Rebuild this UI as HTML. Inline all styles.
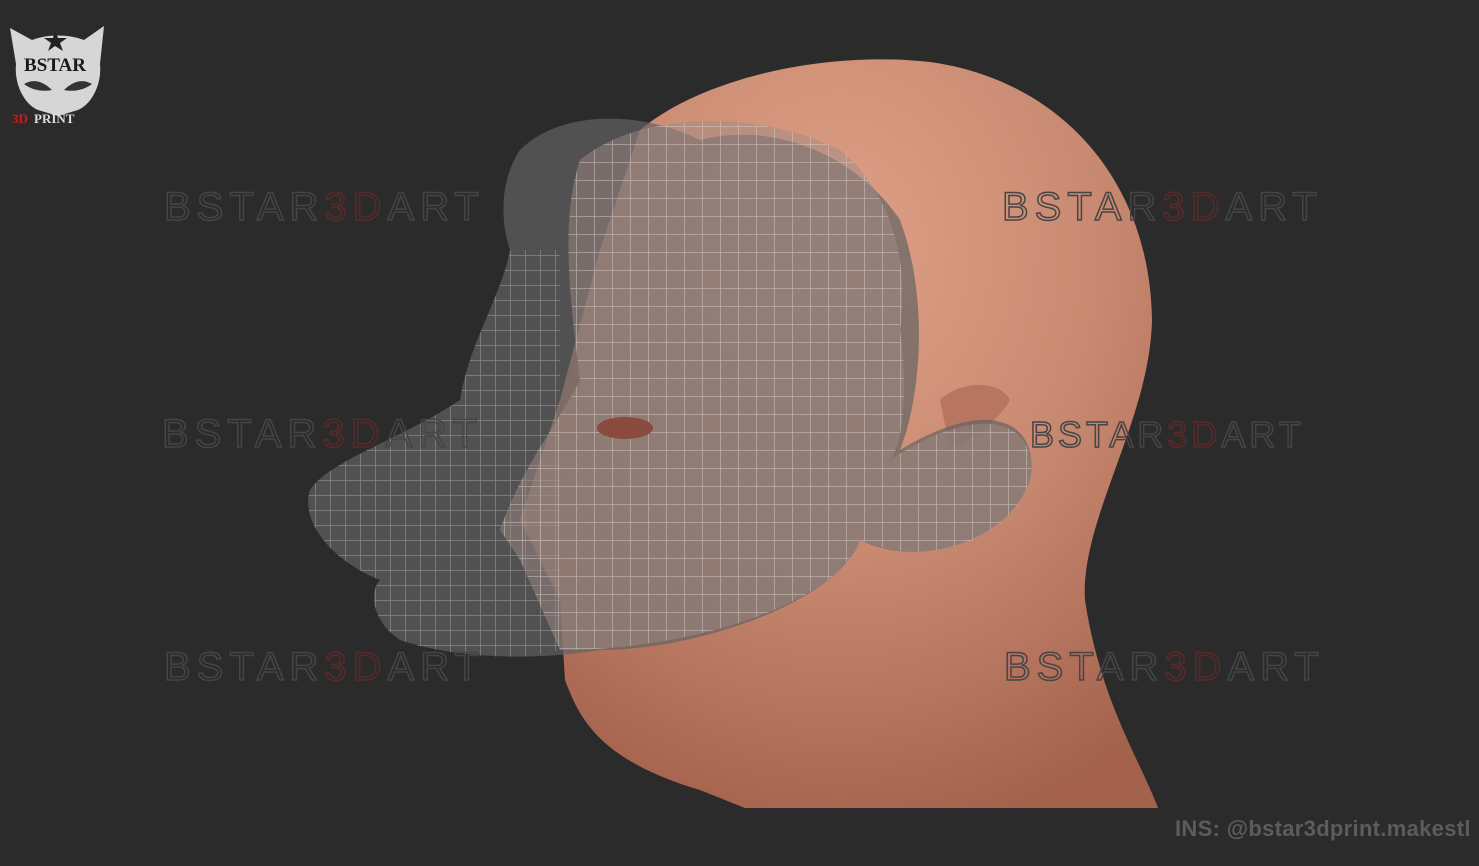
<!DOCTYPE html>
<html><head><style>
html,body{margin:0;padding:0;background:#2b2b2b;width:1479px;height:866px;overflow:hidden;font-family:"Liberation Sans",sans-serif}
.wm{position:absolute;font-size:40px;letter-spacing:6px;color:transparent;-webkit-text-stroke:1.5px #454545;font-weight:300}
.wm b{font-weight:300;-webkit-text-stroke:1.5px #5a2a2a}
</style></head><body>
<svg width="1479" height="866" style="position:absolute;left:0;top:0">
<defs>
<radialGradient id="skin" cx="0.5" cy="0.25" r="0.8">
<stop offset="0" stop-color="#e0a088"/><stop offset="0.5" stop-color="#c98a72"/><stop offset="1" stop-color="#a4624d"/>
</radialGradient>
<pattern id="grid" width="18" height="18" patternUnits="userSpaceOnUse">
<path d="M0 0H18M0 0V18" stroke="#d8d0cc" stroke-width="1.5" fill="none" opacity="0.6"/>
</pattern>
<pattern id="grid2" width="15" height="15" patternUnits="userSpaceOnUse">
<path d="M0 0H15M0 0V15" stroke="#a0a0a0" stroke-width="1.5" fill="none" opacity="0.7"/>
</pattern>
</defs>
<path d="M1158 808 C1140 760 1100 700 1085 600 C1080 520 1150 420 1152 320 C1150 180 1060 80 930 62 C820 50 700 80 640 130 L600 250 L560 400 L520 520 L560 600 L565 680 C580 720 600 760 700 790 L745 808 Z" fill="url(#skin)"/>
<path d="M940 400 C960 380 1000 380 1010 400 C1000 420 970 440 950 450 Z" fill="#b87560"/>
<path d="M520 150 C560 110 640 110 700 140 C780 120 860 160 900 220 C930 300 920 400 900 450 C1000 390 1040 430 1030 480 C1010 540 920 570 860 540 C840 600 700 650 600 650 C540 660 460 660 400 640 C370 620 370 590 380 580 C330 560 300 520 310 490 C330 460 400 440 460 400 C470 340 500 300 510 250 C500 220 500 180 520 150 Z" fill="#626262" opacity="0.7"/>
<path d="M310 490 C330 460 400 440 460 400 C470 340 500 300 510 250 L560 250 L560 650 C520 660 460 660 400 640 C370 620 370 590 380 580 C330 560 300 520 310 490 Z" fill="url(#grid2)"/>
<path d="M580 160 C640 110 760 110 840 150 C890 190 910 260 900 330 C910 400 900 450 890 460 C980 400 1040 420 1030 480 C1010 540 930 570 860 540 C840 600 700 650 560 650 L520 560 L500 530 C520 470 560 420 580 380 C570 300 560 220 580 160 Z" fill="#a08a84" opacity="0.5"/>
<path d="M580 160 C640 110 760 110 840 150 C890 190 910 260 900 330 C910 400 900 450 890 460 C980 400 1040 420 1030 480 C1010 540 930 570 860 540 C840 600 700 650 560 650 L520 560 L500 530 C520 470 560 420 580 380 C570 300 560 220 580 160 Z" fill="url(#grid)"/>
<ellipse cx="625" cy="428" rx="28" ry="11" fill="#8a4a3e"/>
</svg>
<div class="wm" style="left:164px;top:185px">BSTAR<b>3D</b>ART</div>
<div class="wm" style="left:1002px;top:185px">BSTAR<b>3D</b>ART</div>
<div class="wm" style="left:162px;top:412px">BSTAR<b>3D</b>ART</div>
<div class="wm" style="left:1030px;top:414px;font-size:36px;letter-spacing:4px">BSTAR<b>3D</b>ART</div>
<div class="wm" style="left:164px;top:645px">BSTAR<b>3D</b>ART</div>
<div class="wm" style="left:1004px;top:645px">BSTAR<b>3D</b>ART</div>
<svg width="100" height="110" style="position:absolute;left:8px;top:24px">
<path d="M2 4 L24 16 C40 10 60 10 76 16 L96 2 L92 40 C94 60 84 80 70 86 L50 92 L30 86 C16 80 6 60 8 40 Z" fill="#d6d6d6"/>
<polygon points="47,6 50,14 59,14 52,19 55,27 47,22 40,27 43,19 36,14 45,14" fill="#222"/>
<path d="M16 60 C26 54 36 58 44 66 C34 68 24 66 16 60Z M84 60 C74 54 64 58 56 66 C66 68 76 66 84 60Z" fill="#333"/>
<text x="47" y="47" text-anchor="middle" font-family="Liberation Serif" font-weight="bold" font-size="19" fill="#1a1a1a">BSTAR</text>
<text x="4" y="99" font-family="Liberation Serif" font-weight="bold" font-size="13" fill="#d01818">3D</text>
<text x="26" y="99" font-family="Liberation Serif" font-weight="bold" font-size="13" fill="#dcdcdc">PRINT</text>
</svg>
<div style="position:absolute;left:1175px;top:816px;font-size:22px;font-weight:bold;color:#5c5c5c;letter-spacing:0.3px">INS: @bstar3dprint.makestl</div>
</body></html>
